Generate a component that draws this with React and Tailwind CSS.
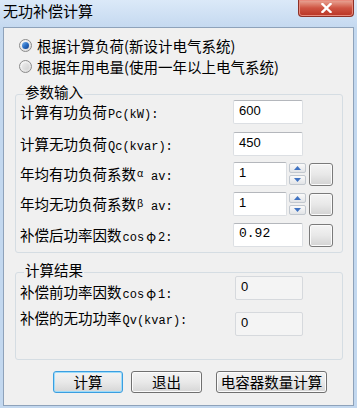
import React from 'react';

const cjk = "font-['Noto_Sans_CJK_SC','Noto_Sans',sans-serif]";
const mono = "font-['Liberation_Mono','DejaVu_Sans_Mono',monospace]";

function Radio({ checked }) {
  return (
    <span className="flex h-[13px] w-[13px] shrink-0 items-center justify-center rounded-full border border-[#8b8b8b] bg-linear-to-br from-[#fbfbfb] to-[#d8d8d8]">
      {checked ? (
        <span className="h-[7px] w-[7px] rounded-full bg-linear-to-br from-[#7cb6f0] via-[#2a6fc4] to-[#123f8a]" />
      ) : (
        <span className="h-[7px] w-[7px] rounded-full bg-linear-to-br from-[#ececec] to-[#d2d2d2]" />
      )}
    </span>
  );
}

// 标签: 中文 + 希腊字母 + 西文部分
function Label({ cn, pre, phi, post, greek, sub }) {
  return (
    <span className={`flex items-baseline text-[14.5px] leading-[18px] text-black ${cjk}`}>
      {cn}
      {greek && <span className="relative -top-[3px] ml-[1px] inline-block w-[11px] text-[10px]">{greek}</span>}
      {pre && <span className={`ml-[1px] text-[12px] ${mono}`}>{pre}</span>}
      {phi && <span className="inline-block w-[14px] text-center text-[13px]">φ</span>}
      {post && <span className={`text-[12px] ${mono}`}>{post}</span>}
      {sub && <span className={`ml-[3px] text-[12px] ${mono}`}>{sub}</span>}
    </span>
  );
}

function TextBox({ value, width = 'w-[70px]', disabled = false, mono: useMono = false }) {
  return (
    <div
      className={`flex h-[24px] items-center rounded-[2px] border pl-[5px] pb-[2px] text-[13px] text-black ${width} ${
        disabled
          ? 'border-[#d6d9dd] bg-[#f4f4f4]'
          : 'border-[#dcdfe3] border-t-[#b4b7bc] bg-white'
      } ${useMono ? "font-['Liberation_Mono',monospace]" : "font-['Liberation_Sans',Arial,sans-serif]"}`}
    >
      {value}
    </div>
  );
}

function Arrow({ up }) {
  return (
    <svg width="7" height="4" viewBox="0 0 7 4">
      <path d={up ? 'M0 4 L3.5 0 L7 4 Z' : 'M0 0 L3.5 4 L7 0 Z'} fill="#3f72c2" />
    </svg>
  );
}

function Spin() {
  return (
    <div className="ml-[2px] flex flex-col gap-[2px]">
      <div className="flex h-[10px] w-[17px] items-center justify-center rounded-[2px] border border-[#c2c8cf] bg-linear-to-b from-[#fafafa] to-[#e2e4e7]">
        <Arrow up />
      </div>
      <div className="flex h-[10px] w-[17px] items-center justify-center rounded-[2px] border border-[#c2c8cf] bg-linear-to-b from-[#fafafa] to-[#e2e4e7]">
        <Arrow />
      </div>
    </div>
  );
}

function SquareButton({ className = '' }) {
  return (
    <div
      className={`h-[23px] w-[24px] rounded-[3px] border border-[#7a7a7a] bg-linear-to-b from-[#f4f4f4] via-[#e8e8e8] to-[#d3d3d3] shadow-[inset_0_0_0_1px_#fbfbfb] ${className}`}
    />
  );
}

function Button({ children, width, focused }) {
  return (
    <button
      className={`flex h-[22px] items-center justify-center rounded-[3px] border text-[14.5px] leading-none text-black ${cjk} ${width} ${
        focused
          ? 'border-[#3b9ee0] shadow-[inset_0_0_0_1px_#9ddcfa]'
          : 'border-[#707070] shadow-[inset_0_0_0_1px_#fbfbfb]'
      } bg-linear-to-b from-[#f3f3f3] via-[#e9e9e9] to-[#d6d6d6]`}
    >
      {children}
    </button>
  );
}

function GroupBox({ title, className = '', children }) {
  return (
    <div className={`relative ml-[11px] mr-[10px] rounded-[3px] border border-[#d5dde3] ${className}`}>
      <span className={`absolute -top-[12px] left-[8px] bg-[#f0f0f0] px-[1px] text-[14.5px] leading-[18px] text-black ${cjk}`}>
        {title}
      </span>
      {children}
    </div>
  );
}

export default function App() {
  return (
    <div className="flex h-[408px] w-[357px] flex-col bg-[#c3d8ef]">
      {/* 标题栏 */}
      <div className="flex h-[27px] items-start justify-between bg-linear-to-b from-[#dbe9f8] to-[#c5d9f0]">
        <span className={`ml-[3px] mt-[2px] text-[15px] leading-[18px] text-black ${cjk}`}>无功补偿计算</span>
        <div className="mr-[3px] flex h-[17px] w-[56px] items-center justify-center rounded-b-[4px] border border-t-0 border-[#8d3127] bg-linear-to-b from-[#e9a899] via-[#cf5443] to-[#b83424] shadow-[inset_0_0_0_1px_#e88a7c]">
          <svg width="11" height="10" viewBox="0 0 11 10">
            <path d="M1.5 1 L9.5 9 M9.5 1 L1.5 9" stroke="#fff" strokeWidth="2.4" strokeLinecap="square" />
          </svg>
        </div>
      </div>

      {/* 窗口主体 */}
      <div className="ml-[3px] mr-[3px] h-[379px] border border-[#8ea2ba] bg-[#f0f0f0]">
        <div className={`flex flex-col pl-[15px] pt-[7px] text-[14.5px] text-black ${cjk}`}>
          <div className="flex h-[21px] items-center gap-[5px]">
            <Radio checked />
            <span className="leading-[18px]">根据计算负荷(新设计电气系统)</span>
          </div>
          <div className="flex h-[21px] items-center gap-[5px]">
            <Radio />
            <span className="leading-[18px]">根据年用电量(使用一年以上电气系统)</span>
          </div>
        </div>

        <GroupBox title="参数输入" className="mt-[17px] h-[159px] pt-[5px]">
          <div className="flex items-center">
            <div className="w-[217px] pl-[4px] pt-[3px]">
              <Label cn="计算有功负荷" pre="Pc(kW):" />
            </div>
            <TextBox value="600" />
          </div>
          <div className="mt-[8px] flex items-center">
            <div className="w-[217px] pl-[4px] pt-[3px]">
              <Label cn="计算无功负荷" pre="Qc(kvar):" />
            </div>
            <TextBox value="450" />
          </div>
          <div className="mt-[6px] flex items-center">
            <div className="w-[217px] pl-[4px] pt-[3px]">
              <Label cn="年均有功负荷系数" greek="α" sub="av:" />
            </div>
            <TextBox value="1" width="w-[54px]" />
            <Spin />
            <SquareButton className="ml-[3px]" />
          </div>
          <div className="mt-[6px] flex items-center">
            <div className="w-[217px] pl-[4px] pt-[3px]">
              <Label cn="年均无功负荷系数" greek="β" sub="av:" />
            </div>
            <TextBox value="1" width="w-[54px]" />
            <Spin />
            <SquareButton className="ml-[3px]" />
          </div>
          <div className="mt-[7px] flex items-center">
            <div className="w-[217px] pl-[4px] pt-[3px]">
              <Label cn="补偿后功率因数" pre="cos" phi post="2:" />
            </div>
            <TextBox value="0.92" mono />
            <SquareButton className="ml-[6px]" />
          </div>
        </GroupBox>

        <GroupBox title="计算结果" className="mt-[19px] h-[88px] pt-[3px]">
          <div className="flex items-start">
            <div className="w-[219px] pl-[4px] pt-[7px]">
              <Label cn="补偿前功率因数" pre="cos" phi post="1:" />
            </div>
            <TextBox value="0" width="w-[68px]" disabled />
          </div>
          <div className="mt-[6px] flex items-start">
            <div className="-mt-[1px] w-[219px] pl-[4px]">
              <Label cn="补偿的无功功率" pre="Qv(kvar):" />
            </div>
            <div className="pt-[2px]">
              <TextBox value="0" width="w-[68px]" disabled />
            </div>
          </div>
        </GroupBox>

        <div className="mt-[11px] flex pl-[49px]">
          <Button width="w-[70px]" focused>计算</Button>
          <div className="ml-[8px]">
            <Button width="w-[71px]">退出</Button>
          </div>
          <div className="ml-[14px]">
            <Button width="w-[111px]">电容器数量计算</Button>
          </div>
        </div>
      </div>
    </div>
  );
}
